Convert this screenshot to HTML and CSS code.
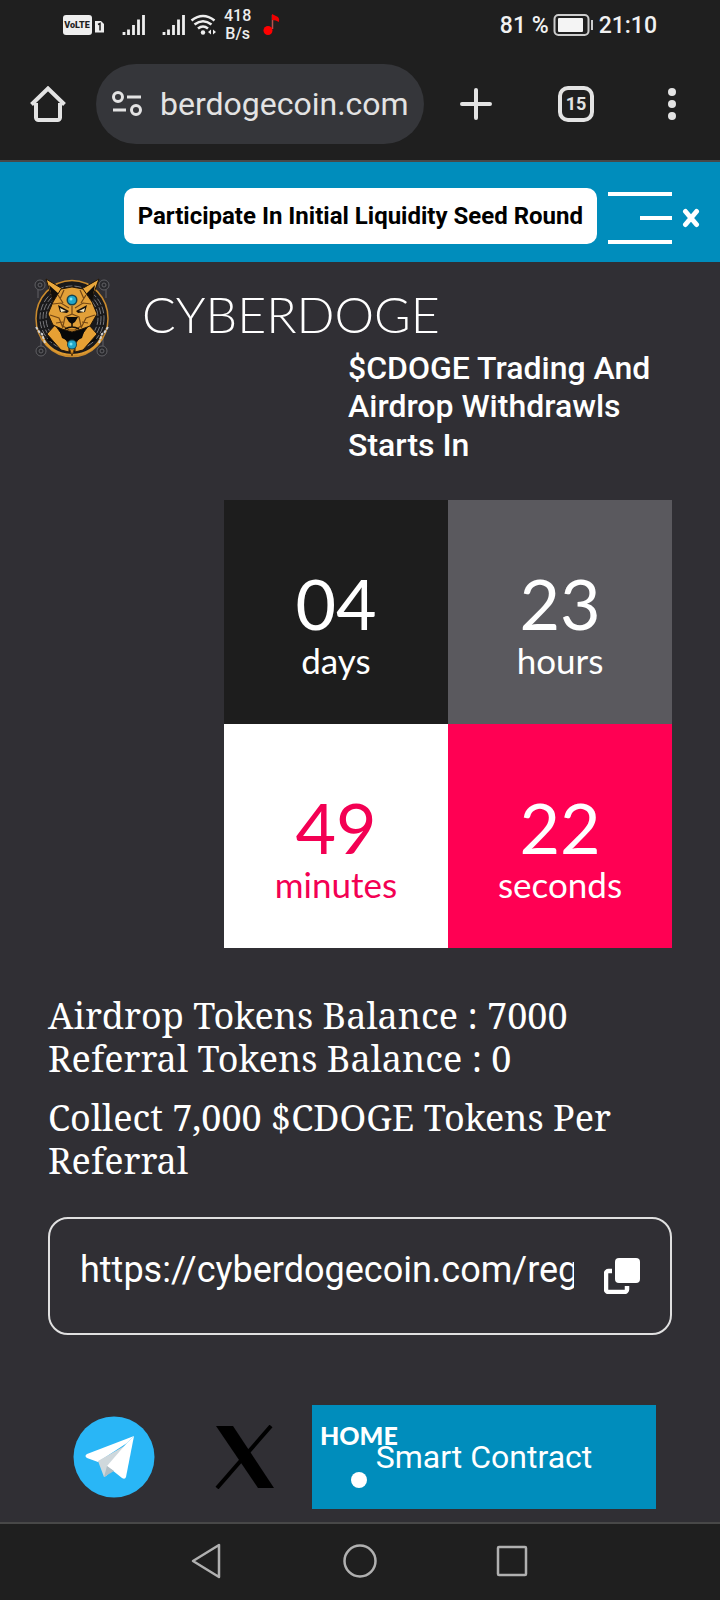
FILE: index.html
```html
<!DOCTYPE html>
<html lang="en">
<head>
<meta charset="utf-8">
<meta name="viewport" content="width=device-width, initial-scale=1">
<title>Cyberdoge</title>
<link rel="stylesheet" href="styles.css">
</head>
<body>
<header class="chrome">
  <div class="status">
    <div class="status-left">
      <svg class="volte" width="42" height="22" viewBox="0 0 42 22" aria-hidden="true">
        <rect x="0" y="1" width="29" height="20" rx="3" fill="#eee"/>
        <text x="14" y="14" text-anchor="middle" font-family="Roboto, sans-serif" font-size="9" font-weight="900" fill="#1f1f1f">VoLTE</text>
        <path d="M32 7h6l3 3v8.500h-9z" fill="#eee"/>
        <path d="M35 10.500l2-1v7" stroke="#1f1f1f" stroke-width="1.500" fill="none"/>
      </svg>
      <svg class="signal" width="24" height="22" viewBox="0 0 24 22" aria-hidden="true"><path d="M2 18v3M6.500 15.500V21M11.500 11V21M16.500 5.500V21M21.500 1V21" stroke="#eee" stroke-width="2.800"/></svg>
      <svg class="signal" width="24" height="22" viewBox="0 0 24 22" aria-hidden="true"><path d="M2 18v3M6.500 15.500V21M11.500 11V21M16.500 5.500V21M21.500 1V21" stroke="#eee" stroke-width="2.800"/></svg>
      <svg class="wifi" width="28" height="22" viewBox="0 0 28 22" aria-hidden="true">
        <path d="M1.500 6.500Q13 -2.500 24.500 6.500M4.500 10.500Q13 4 21.500 10.500M8 14.500Q13 10.500 18 14.500" fill="none" stroke="#eee" stroke-width="2.600"/>
        <circle cx="13" cy="18.500" r="2.200" fill="#eee"/>
        <path d="M21 15.500v5l-3-2.500zM23 15.500v5l3-2.500z" fill="#eee"/>
      </svg>
      <div class="speed"><span>418</span><span>B/s</span></div>
      <svg class="note" width="18" height="22" viewBox="0 0 18 22" aria-hidden="true">
        <path d="M10.500 1v14" stroke="#b9514c" stroke-width="1.500"/>
        <path d="M10 0l6 3q2 2 1 5-3-2-7-2z" fill="#f00000"/>
        <circle cx="6" cy="16.500" r="4.500" fill="#f00"/>
      </svg>
    </div>
    <div class="status-right">
      <span>81 %</span>
      <svg width="42" height="22" viewBox="0 0 42 22" aria-hidden="true">
        <rect x="1.500" y="1" width="34" height="20" rx="4" fill="none" stroke="#ccc" stroke-width="2"/>
        <rect x="5" y="4" width="25" height="14" rx="1" fill="#f4f4f4"/>
        <path d="M39 6v10" stroke="#ccc" stroke-width="2"/>
      </svg>
      <span>21:10</span>
    </div>
  </div>
  <div class="toolbar">
    <button class="icon-btn" aria-label="Home">
      <svg width="36" height="36" viewBox="0 0 36 36"><path d="M6 17v14.500a2.500 2.500 0 0 0 2.500 2.500h19a2.500 2.500 0 0 0 2.500-2.500V17M1.500 18.500L18 2.500l16.500 16" fill="none" stroke="#e3e3e3" stroke-width="4"/></svg>
    </button>
    <button class="url">
      <svg width="30" height="28" viewBox="0 0 30 28" aria-hidden="true"><g fill="none" stroke="#e3e3e3" stroke-width="3"><circle cx="6" cy="7" r="4.500"/><path d="M15 7h14M1 20h13"/><circle cx="24" cy="20" r="4.500"/></g></svg>
      <span>berdogecoin.com</span>
    </button>
    <button class="icon-btn new-tab" aria-label="New tab">
      <svg width="32" height="32" viewBox="0 0 32 32"><path d="M16 2v28M2 16h28" stroke="#e3e3e3" stroke-width="4" stroke-linecap="round"/></svg>
    </button>
    <button class="icon-btn tabs" aria-label="15 open tabs"><span class="tab-count">15</span></button>
    <button class="icon-btn menu" aria-label="Menu">
      <svg width="8" height="32" viewBox="0 0 8 32" fill="#e3e3e3"><circle cx="4" cy="4" r="4"/><circle cx="4" cy="16" r="4"/><circle cx="4" cy="28" r="4"/></svg>
    </button>
  </div>
</header>

<div class="banner">
  <button class="seed">Participate In Initial Liquidity Seed Round</button>
  <button class="burger" aria-label="Open menu"><span></span><span class="short"></span><span></span></button>
  <button class="close" aria-label="Close">
    <svg width="18" height="20" viewBox="0 0 18 20"><path d="M3.500 3.500L14.500 16.500M14.500 3.500L3.500 16.500" stroke="#fff" stroke-width="5" stroke-linecap="round"/></svg>
  </button>
</div>

<main class="page">
  <div class="brand">
    <svg width="76" height="80" viewBox="0 0 76 80" aria-hidden="true">
      <g fill="#29292d" stroke="#606064" stroke-width="1">
        <circle cx="6" cy="7" r="5"/><circle cx="70" cy="7" r="5"/><circle cx="7" cy="73" r="5"/><circle cx="68" cy="73" r="5"/>
        <circle cx="6" cy="7" r="2"/><circle cx="70" cy="7" r="2"/><circle cx="7" cy="73" r="2"/><circle cx="68" cy="73" r="2"/>
        <path d="M4 12v8M72 12v8M7 58v10M69 58v10"/>
      </g>
      <ellipse cx="38" cy="40.500" rx="36" ry="38" fill="#19191b" stroke="#c98a2d" stroke-width="1.500"/>
      <g fill="none" stroke="#77777b" stroke-width="1" stroke-dasharray="7 2">
        <circle cx="38" cy="40" r="32"/><circle cx="38" cy="40" r="29"/><circle cx="38" cy="40" r="26"/>
      </g>
      <path d="M8 58Q16 76 38 77 60 76 68 58" fill="none" stroke="#dd9930" stroke-width="2"/>
      <path d="M2 49l4 6 2 1 3 9M74 49l-4 6-2 1-3 9" stroke="#d0d0d0" stroke-width="2" fill="none" stroke-dasharray="3 1"/>
      <path d="M19 50l38 0 6 12-20 8-10 0-20-8z" fill="#080808"/>
      <path d="M21 47l-8 9 14 16 8 2v-8zM55 47l8 9-14 16-8 2v-8z" fill="#e6a034" stroke="#221507"/>
      <path d="M24 48q14 10 28 0l-4 12-10 5-10-5z" fill="#080808"/>
      <path d="M34 66l4 12 4-12z" fill="#d88e22" stroke="#5c370a"/>
      <path d="M12 1l20 12-12 13zM65 1L44 13l12 13z" fill="#e9a73c" stroke="#221507"/>
      <path d="M15 7l10 9-6 8zM61 7l-9 9 6 8z" fill="#100d0a"/>
      <path d="M27 11l11-2 11 2 9 13 5 12-7 12-8 3-10 3-10-3-9-4-5-11 5-12z" fill="#e2a038" stroke="#221507"/>
      <path d="M38 28v8l-7 3-2 9 6 4h6l6-4-2-9-7-3M16 37l9 3 4 10M61 37l-9 3-5 10M24 17l5 8M52 17l-5 8M19 26l8-1 8 5M57 26l-8-1-8 5M22 45l7-1M54 45l-6-1M30 12l-4 9M46 12l4 9" fill="none" stroke="#744714" stroke-width="1.200"/>
      <path d="M24 27l11 6-2 2-7-1zM53 27l-11 6 2 2 7-1z" fill="#16100b"/>
      <path d="M26 30l6 3-5 1zM51 30l-6 3 5 1z" fill="#f3e7c0"/>
      <path d="M32 39h12l-3 5-3 2-3-2z" fill="#090909"/>
      <path d="M38 45v4M31 51q7-4 14 0" fill="none" stroke="#171008" stroke-width="1.500"/>
      <circle cx="38" cy="22" r="5.500" fill="#16444f"/><circle cx="38" cy="22" r="4" fill="#21a6c9"/><circle cx="37" cy="21" r="1.500" fill="#79e4f5"/>
      <circle cx="38" cy="66.500" r="5" fill="#16444f"/><circle cx="38" cy="66.500" r="4" fill="#21a6c9"/><circle cx="37" cy="66" r="1.500" fill="#79e4f5"/>
    </svg>
    <h1>CYBERDOGE</h1>
  </div>

  <h2 class="tagline">$CDOGE Trading And Airdrop Withdrawls Starts In</h2>

  <div class="countdown">
    <div class="cell days"><span class="num">04</span><span class="unit">days</span></div>
    <div class="cell hours"><span class="num">23</span><span class="unit">hours</span></div>
    <div class="cell minutes"><span class="num">49</span><span class="unit">minutes</span></div>
    <div class="cell seconds"><span class="num">22</span><span class="unit">seconds</span></div>
  </div>

  <div class="balances">
    <p>Airdrop Tokens Balance : 7000<br>Referral Tokens Balance : 0</p>
    <p>Collect 7,000 $CDOGE Tokens Per Referral</p>
  </div>

  <div class="referral">
    <input type="text" aria-label="Referral link" value="https://cyberdogecoin.com/register" readonly>
    <button aria-label="Copy link">
      <svg width="36" height="36" viewBox="0 0 36 36"><rect x="11" y="0" width="25" height="25" rx="4" fill="#fff"/><path d="M8 13H4.500A2.500 2.500 0 0 0 2 15.500v16A2.500 2.500 0 0 0 4.500 34h16a2.500 2.500 0 0 0 2.500-2.500V28" fill="none" stroke="#fff" stroke-width="4.500"/></svg>
    </button>
  </div>

  <div class="links">
    <a href="#telegram" aria-label="Telegram">
      <svg width="82" height="82" viewBox="0 0 82 82"><circle cx="41" cy="41" r="40.500" fill="#29b6f6"/><path d="M61 20L14 38q-3 2 0 4l11 4 29-19z" fill="#fff"/><path d="M25 45l6 16q2 0 4-3l6-8 14-22z" fill="#cfd8dc"/><path d="M61 20l-8 41q-1 3-4 1L34 50l19-22z" fill="#fff"/><path d="M31 61l3-11 7 5z" fill="#b0bec5"/></svg>
    </a>
    <a href="#x" aria-label="X">
      <svg width="60" height="64" viewBox="0 0 60 64"><path d="M1 1h17l41 62H43z" fill="#000"/><path d="M56 1L2 63" stroke="#000" stroke-width="4" fill="none"/></svg>
    </a>
    <div class="contract-wrap">
      <button class="contract">Smart Contract</button>
      <a class="home-tab" href="#home">HOME<span class="dot"></span></a>
    </div>
  </div>
</main>

<nav class="sysnav">
  <button aria-label="Back"><svg width="36" height="36" viewBox="0 0 36 36"><path d="M29 2v32L3 18z" fill="none" stroke="#b0b0b0" stroke-width="2.500" stroke-linejoin="round"/></svg></button>
  <button aria-label="Home screen"><svg width="36" height="36" viewBox="0 0 36 36"><circle cx="18" cy="18" r="15.500" fill="none" stroke="#b0b0b0" stroke-width="2.500"/></svg></button>
  <button aria-label="Recent apps"><svg width="36" height="36" viewBox="0 0 36 36"><rect x="4" y="4" width="28" height="28" rx="1" fill="none" stroke="#b0b0b0" stroke-width="2.500"/></svg></button>
</nav>
</body>
</html>
```
FILE: styles.css
```css
* { box-sizing: border-box; }
body {
  margin: 0;
  min-height: 100vh;
  display: flex;
  flex-direction: column;
  background: #302f34;
  color: #fff;
  font-family: Roboto, "Liberation Sans", sans-serif;
}
button {
  margin: 0;
  padding: 0;
  border: 0;
  background: none;
  color: inherit;
  font: inherit;
}
svg { display: block; flex: none; }
h1, h2, p { margin: 0; }

.chrome {
  background: #1f1f1f;
  border-bottom: 2px solid #484848;
}
.status {
  display: flex;
  justify-content: space-between;
  height: 48px;
  padding: 2px 63px 0;
  align-items: center;
}
.status-left, .status-right { display: flex; align-items: center; }
.status-right {
  gap: 4px;
  color: #f1f1f1;
  font-size: 23px;
  font-weight: 500;
}
.volte { margin-right: 17px; }
.signal { margin-right: 16px; }
.wifi { margin-left: -12px; }
.speed {
  display: flex;
  flex-direction: column;
  align-items: center;
  margin: 0 11px 0 6px;
  font-size: 16px;
  line-height: 18px;
  font-weight: 500;
  color: #eee;
}
.toolbar {
  display: flex;
  align-items: center;
  padding: 16px 24px;
}
.icon-btn {
  display: flex;
  flex: none;
  width: 48px;
  height: 48px;
  align-items: center;
  justify-content: center;
}
.url {
  display: flex;
  flex: 1;
  min-width: 0;
  height: 80px;
  margin: 0 28px 0 24px;
  padding: 0 16px;
  gap: 18px;
  align-items: center;
  border-radius: 40px;
  background: #35363a;
  color: #e3e3e3;
  font-size: 32px;
  overflow: hidden;
}
.tabs { margin-left: 52px; }
.menu { margin-left: 48px; }
.tab-count {
  width: 36px;
  height: 36px;
  border: 4px solid #e3e3e3;
  border-radius: 10px;
  color: #e3e3e3;
  font-size: 18px;
  line-height: 28px;
  font-weight: 700;
}

.banner {
  display: flex;
  height: 100px;
  padding: 26px 20px 18px;
  justify-content: flex-end;
  align-items: flex-start;
  background: #008dbc;
}
.seed {
  height: 56px;
  padding: 0 14px;
  border-radius: 10px;
  background: #fff;
  color: #000;
  font-size: 24px;
  font-weight: 700;
  white-space: nowrap;
}
.burger {
  display: flex;
  flex-direction: column;
  align-items: flex-end;
  gap: 20px;
  width: 64px;
  margin: 4px 10px 0 11px;
}
.burger span { width: 100%; height: 4px; background: #fff; }
.burger .short { width: 50%; }
.close { margin-top: 20px; }

.page {
  flex: 1;
  padding: 16px 48px 12px;
}
.brand {
  display: flex;
  margin-left: -14px;
  gap: 32px;
  align-items: flex-start;
}
.brand h1 {
  margin-top: 6px;
  font-family: Lato, sans-serif;
  font-size: 50px;
  line-height: 60px;
  font-weight: 300;
}
.tagline {
  width: 324px;
  margin: -9px 0 36px auto;
  font-size: 32px;
  line-height: 1.2;
  font-weight: 500;
}
.countdown {
  display: grid;
  grid-template-columns: 224px 224px;
  grid-auto-rows: 224px;
  justify-content: end;
  font-family: Lato, sans-serif;
}
.cell {
  display: flex;
  flex-direction: column;
  align-items: center;
  padding-top: 61px;
}
.num { font-size: 70px; line-height: 84px; }
.unit { font-size: 35px; line-height: 30px; }
.days { background: #1d1d1d; }
.hours { background: #5a595e; }
.minutes { background: #fff; color: #f30053; }
.seconds { background: #ff0053; }

.balances {
  margin-top: 46px;
  font-family: "Noto Serif", "Liberation Serif", serif;
  font-size: 36px;
  line-height: 43px;
}
.balances p + p { margin-top: 16px; }

.referral {
  display: flex;
  height: 118px;
  margin-top: 35px;
  padding: 0 30px;
  gap: 30px;
  align-items: center;
  border: 2px solid #e0e0e0;
  border-radius: 20px;
}
.referral input {
  flex: 1;
  min-width: 0;
  height: 48px;
  margin-bottom: 12px;
  padding: 0;
  border: 0;
  outline: 0;
  background: none;
  color: #fff;
  font: 36px/48px Roboto, sans-serif;
}

.links {
  display: flex;
  align-items: center;
  margin-top: 70px;
  padding: 0 16px 0 25px;
}
.links > a + a { margin: 0 37px 0 60px; }
.contract-wrap {
  position: relative;
  flex: 1;
}
.contract {
  display: block;
  width: 100%;
  height: 104px;
  background: #008dbc;
  font-size: 32px;
}
.home-tab {
  position: absolute;
  top: 16px;
  left: 8px;
  display: flex;
  flex-direction: column;
  align-items: center;
  gap: 23px;
  color: #fff;
  font: 900 25px/28px Lato, sans-serif;
  text-decoration: none;
}
.dot {
  width: 16px;
  height: 16px;
  border-radius: 50%;
  background: #fff;
}

.sysnav {
  display: flex;
  height: 78px;
  padding: 0 190px 2px;
  justify-content: space-between;
  align-items: center;
  border-top: 2px solid #484848;
  background: #1f1f1f;
}
```
